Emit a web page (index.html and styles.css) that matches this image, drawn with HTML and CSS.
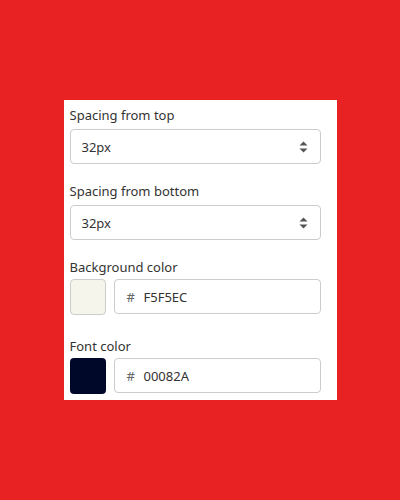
FILE: index.html
```html
<!DOCTYPE html>
<html>
<head>
<meta charset="utf-8">
<link rel="stylesheet" href="styles.css">
</head>
<body>
<div class="stage">
  <div class="panel">
    <div class="field">
      <label class="label">Spacing from top</label>
      <div class="select">
        <span class="value">32px</span>
        <svg class="arrows" width="9" height="12" viewBox="0 0 9 12"><path d="M4.5 0.5 L8.5 4.5 L0.5 4.5 Z M4.5 11.5 L8.5 7.5 L0.5 7.5 Z" fill="#555"/></svg>
      </div>
    </div>
    <div class="field">
      <label class="label">Spacing from bottom</label>
      <div class="select">
        <span class="value">32px</span>
        <svg class="arrows" width="9" height="12" viewBox="0 0 9 12"><path d="M4.5 0.5 L8.5 4.5 L0.5 4.5 Z M4.5 11.5 L8.5 7.5 L0.5 7.5 Z" fill="#555"/></svg>
      </div>
    </div>
    <div class="field field-color">
      <label class="label">Background color</label>
      <div class="color-row">
        <div class="swatch swatch-light"></div>
        <div class="hex-input"><span class="hash">#</span><span class="hex">F5F5EC</span></div>
      </div>
    </div>
    <div class="field field-color field-last">
      <label class="label">Font color</label>
      <div class="color-row">
        <div class="swatch swatch-dark"></div>
        <div class="hex-input"><span class="hash">#</span><span class="hex">00082A</span></div>
      </div>
    </div>
  </div>
</div>
</body>
</html>
```

FILE: styles.css
```css
html, body {
  margin: 0;
  padding: 0;
}
body {
  background: #e82222;
  font-family: "Noto Sans", "Open Sans", sans-serif;
  font-size: 13px;
  color: #333;
}
.stage {
  width: 400px;
  height: 500px;
  display: flex;
  align-items: center;
  justify-content: center;
}
.panel {
  width: 273px;
  height: 300px;
  background: #fff;
  box-sizing: border-box;
  padding: 5px 16px 0 6px;
  overflow: hidden;
  display: flex;
  flex-direction: column;
  gap: 17px;
}
.field {
  display: flex;
  flex-direction: column;
  gap: 4px;
}
.field-color {
  gap: 2px;
}
.field-last {
  margin-top: 4px;
}
.label {
  display: block;
  line-height: 20px;
  height: 20px;
  color: #333;
}
.select {
  height: 35px;
  box-sizing: border-box;
  border: 1px solid #ccc;
  border-radius: 4px;
  display: flex;
  align-items: center;
  justify-content: space-between;
  padding: 0 12px 0 11px;
}
.value {
  color: #333;
}
.arrows {
  display: block;
}
.color-row {
  display: flex;
  gap: 8px;
}
.swatch {
  width: 36px;
  height: 36px;
  box-sizing: border-box;
  border-radius: 4px;
  flex: none;
}
.swatch-light {
  background: #f5f5ec;
  border: 1px solid #ccc;
}
.swatch-dark {
  background: #00082a;
}
.hex-input {
  flex: 1;
  height: 35px;
  box-sizing: border-box;
  border: 1px solid #ccc;
  border-radius: 4px;
  display: flex;
  align-items: center;
  padding-left: 12px;
}
.hash {
  color: #666;
  width: 17px;
}
.hex {
  color: #333;
}
```
